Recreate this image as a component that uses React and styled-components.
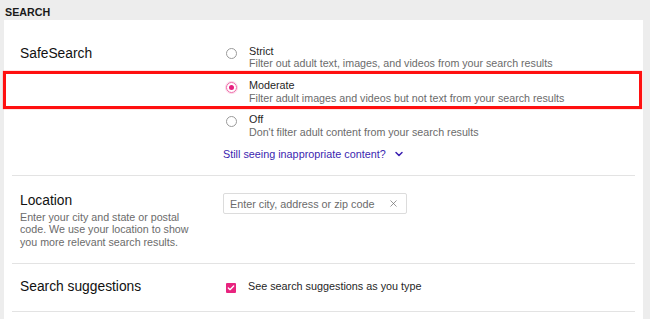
import React from 'react';
import styled, { createGlobalStyle } from 'styled-components';
import { X, ChevronDown, Check } from 'lucide-react';

const GlobalStyle = createGlobalStyle`
    * {
        box-sizing: border-box;
    }

    html, body {
        margin: 0;
        padding: 0;
        background-color: #ededed;
        font-family: "Liberation Sans", Arial, sans-serif;
        overflow: hidden;
    }
`;

const StyledPage = styled.div`
    width: 650px;
    height: 319px;
    padding: 0 7px 0 4px;

    display: flex;
    flex-direction: column;

    h2.page__title {
        height: 20px;
        margin: 0;
        padding: 6px 0 0 1px;

        color: #1a1a1a;
        font-size: 10.7px;
        line-height: 12px;
        font-weight: 700;
    }
`;

const Card = styled.section`
    position: relative;
    flex: 1;

    background-color: white;
`;

const Row = styled.div`
    margin: 0 8px;
    padding: ${({ $top }) => $top}px 8px ${({ $bottom }) => $bottom}px 8px;

    display: grid;
    grid-template-columns: 203px 1fr;
    align-items: start;

    border-bottom: 1px solid #e3e3e3;
`;

const Label = styled.div`
    h3 {
        margin: ${({ $nudge }) => ($nudge ? '1px 0 0 0' : '0')};

        color: #111;
        font-size: 13.8px;
        line-height: 16px;
        font-weight: 400;
    }

    p {
        max-width: 172px;
        margin: 2px 0 0 0;

        color: #6b6b6b;
        font-size: 10.7px;
        line-height: 12.4px;
    }
`;

const Options = styled.div`
    display: flex;
    flex-direction: column;
    gap: 9.4px;
`;

const Option = styled.label`
    display: grid;
    grid-template-columns: 26px 1fr;
    align-items: start;

    strong {
        display: block;

        color: #1f1f1f;
        font-size: 10.8px;
        line-height: 12.4px;
        font-weight: 400;
    }

    span.option__desc {
        display: block;

        color: #6b6b6b;
        font-size: 10.7px;
        line-height: 12.4px;
    }
`;

const Radio = styled.span`
    width: 11px;
    height: 11px;
    margin: 3px 0 0 3px;

    display: flex;
    align-items: center;
    justify-content: center;

    border: 1px solid ${({ $checked }) => ($checked ? '#ef6aa8' : '#9a9a9a')};
    border-radius: 50%;
    box-shadow: ${({ $checked }) => ($checked ? '0 0 0 1px rgba(232, 30, 126, 0.18)' : 'none')};

    &::after {
        content: '';
        width: 5px;
        height: 5px;

        display: ${({ $checked }) => ($checked ? 'block' : 'none')};

        background-color: #e61f7f;
        border-radius: 50%;
    }
`;

const MoreLink = styled.a`
    display: flex;
    align-items: center;
    gap: 7px;

    color: #3b1fb0;
    font-size: 10.8px;
    line-height: 12.4px;
    text-decoration: none;
`;

const LocationInput = styled.div`
    width: 184px;
    height: 21px;
    padding: 0 7px 0 6px;

    display: flex;
    align-items: center;
    justify-content: space-between;

    border: 1px solid #dcdcdc;
    border-radius: 2px;

    span {
        color: #6b6b6b;
        font-size: 10.8px;
    }
`;

const CheckRow = styled.label`
    display: grid;
    grid-template-columns: 25px 1fr;
    align-items: center;

    color: #1f1f1f;
    font-size: 10.8px;
    line-height: 12.4px;
`;

const CheckBox = styled.span`
    width: 10px;
    height: 10px;
    margin: 4px 0 0 3px;

    display: flex;
    align-items: center;
    justify-content: center;

    background-color: #e8247f;
    border-radius: 1px;
`;

const Highlight = styled.div`
    position: absolute;
    top: 51px;
    left: -1px;
    width: 639px;
    height: 38px;

    border: 3px solid #ff1010;
    box-shadow: 0 0 1px rgba(255, 0, 0, 0.6);
    pointer-events: none;
`;

const safeSearchOptions = [
    { title: 'Strict', desc: 'Filter out adult text, images, and videos from your search results' },
    { title: 'Moderate', desc: 'Filter adult images and videos but not text from your search results', checked: true },
    { title: 'Off', desc: "Don't filter adult content from your search results" },
];

export default function App() {
    return (
        <>
            <GlobalStyle />
            <StyledPage>
                <h2 className='page__title'>SEARCH</h2>
                <Card>
                    <Row $top={25} $bottom={15}>
                        <Label $nudge>
                            <h3>SafeSearch</h3>
                        </Label>
                        <Options>
                            {safeSearchOptions.map((option) => (
                                <Option key={option.title}>
                                    <Radio $checked={option.checked} />
                                    <div>
                                        <strong>{option.title}</strong>
                                        <span className='option__desc'>{option.desc}</span>
                                    </div>
                                </Option>
                            ))}
                            <MoreLink href='#'>
                                Still seeing inappropriate content?
                                <ChevronDown size={12} strokeWidth={3} />
                            </MoreLink>
                        </Options>
                    </Row>
                    <Row $top={17} $bottom={15}>
                        <Label>
                            <h3>Location</h3>
                            <p>Enter your city and state or postal code. We use your location to show you more relevant search results.</p>
                        </Label>
                        <LocationInput>
                            <span>Enter city, address or zip code</span>
                            <X size={11} color='#6b6b6b' strokeWidth={1.5} />
                        </LocationInput>
                    </Row>
                    <Row $top={15} $bottom={16}>
                        <Label>
                            <h3>Search suggestions</h3>
                        </Label>
                        <CheckRow>
                            <CheckBox>
                                <Check size={8} color='white' strokeWidth={4} />
                            </CheckBox>
                            See search suggestions as you type
                        </CheckRow>
                    </Row>
                    <Highlight />
                </Card>
            </StyledPage>
        </>
    );
};
